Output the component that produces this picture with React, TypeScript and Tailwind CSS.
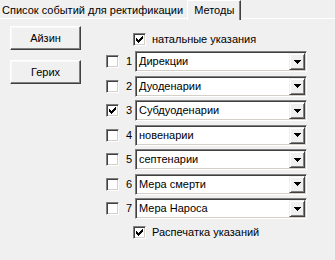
import React from "react";

const Check = ({ checked }: { checked?: boolean }) => (
  <div className="w-[13px] h-[13px] shrink-0 bg-white border border-t-[#808080] border-l-[#808080] border-b-white border-r-white shadow-[inset_1px_1px_0_#404040,inset_-1px_-1px_0_#d4d0c8] flex items-center justify-center">
    {checked && (
      <svg width="7" height="7" viewBox="0 0 7 7" shapeRendering="crispEdges">
        <rect x="6" y="0" width="1" height="1" fill="#000" />
        <rect x="5" y="1" width="2" height="1" fill="#000" />
        <rect x="0" y="2" width="1" height="1" fill="#000" />
        <rect x="4" y="2" width="3" height="1" fill="#000" />
        <rect x="0" y="3" width="2" height="1" fill="#000" />
        <rect x="3" y="3" width="3" height="1" fill="#000" />
        <rect x="0" y="4" width="5" height="1" fill="#000" />
        <rect x="1" y="5" width="3" height="1" fill="#000" />
        <rect x="2" y="6" width="1" height="1" fill="#000" />
      </svg>
    )}
  </div>
);

const Combo = ({ text }: { text: string }) => (
  <div className="w-[172px] h-[21px] bg-white border border-t-[#808080] border-l-[#808080] border-b-white border-r-white shadow-[inset_1px_1px_0_#404040,inset_-1px_-1px_0_#d4d0c8] flex items-center">
    <span className="flex-1 pl-[3px] leading-none">{text}</span>
    <div className="w-[16px] h-[17px] mr-[1px] bg-[#f0f0f0] border border-t-[#f0f0f0] border-l-[#f0f0f0] border-b-[#404040] border-r-[#404040] shadow-[inset_1px_1px_0_#fff,inset_-1px_-1px_0_#808080] flex items-center justify-center">
      <svg width="7" height="4" viewBox="0 0 7 4" shapeRendering="crispEdges">
        <path d="M0 0 H7 L3.5 4 Z" fill="#000" />
      </svg>
    </div>
  </div>
);

const Btn = ({ text }: { text: string }) => (
  <div className="w-[71px] h-[24px] bg-[#f0f0f0] border border-t-white border-l-white border-b-[#404040] border-r-[#404040] shadow-[inset_-1px_-1px_0_#808080,inset_1px_1px_0_#f8f8f8] flex items-center justify-center">
    {text}
  </div>
);

const rows = [
  { n: 1, t: "Дирекции", c: false },
  { n: 2, t: "Дуоденарии", c: false },
  { n: 3, t: "Субдуоденарии", c: true },
  { n: 4, t: "новенарии", c: false },
  { n: 5, t: "септенарии", c: false },
  { n: 6, t: "Мера смерти", c: false },
  { n: 7, t: "Мера Нароса", c: false },
];

export default function App() {
  return (
    <div
      className="w-[335px] h-[260px] bg-[#f0f0f0] text-black text-[11px] overflow-hidden flex flex-col"
      style={{ fontFamily: '"Liberation Sans", Arial, sans-serif' }}
    >
      <div className="h-[19px] flex items-end relative">
        <div className="h-[17px] pl-[2px] pr-[4px] flex items-center border-b border-b-white">
          Список событий для ректификации
        </div>
        <div className="h-[20px] -mb-[1px] px-[6px] flex items-center bg-[#f0f0f0] border-l border-l-white border-t border-t-white border-r border-r-[#404040] shadow-[inset_-1px_0_0_#808080] relative z-10">
          Методы
        </div>
        <div className="flex-1 border-b border-b-white" />
      </div>
      <div className="flex-1 flex">
        <div className="w-[106px] shrink-0 pl-[10px] pt-[7px] flex flex-col gap-[10px]">
          <Btn text="Айзин" />
          <Btn text="Герих" />
        </div>
        <div className="flex flex-col pt-[13px]">
          <div className="flex items-center h-[14px] pl-[27px] gap-[6px]">
            <Check checked />
            <span>натальные указания</span>
          </div>
          <div className="flex flex-col gap-[3.5px] mt-[5px]">
            {rows.map((r) => (
              <div key={r.n} className="flex items-center h-[21px]">
                <Check checked={r.c} />
                <span className="w-[16px] text-right pr-[3px]">{r.n}</span>
                <Combo text={r.t} />
              </div>
            ))}
          </div>
          <div className="flex items-center h-[14px] pl-[27px] gap-[6px] mt-[6px]">
            <Check checked />
            <span>Распечатка указаний</span>
          </div>
        </div>
      </div>
    </div>
  );
}
